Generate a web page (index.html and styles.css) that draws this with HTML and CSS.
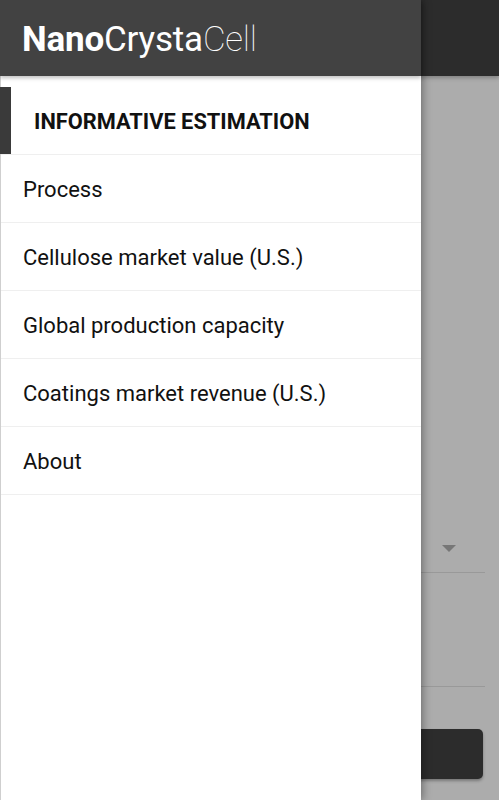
FILE: index.html
```html
<!DOCTYPE html>
<html lang="en">
<head>
    <meta charset="UTF-8">
    <meta name="viewport" content="width=device-width, initial-scale=1.0">
    <title>NanoCrystaCell</title>
    <link rel="stylesheet" href="styles.css">
</head>
<body>
    <div id="app">
        <nav id="drawer">
            <div class="drawer-head">
                <span class="logo"><b>Nano</b>Crysta<span class="thin">Cell</span></span>
            </div>
            <ul class="menu">
                <li class="menu-title"><span class="marker"></span>INFORMATIVE ESTIMATION</li>
                <li>Process</li>
                <li>Cellulose market value (U.S.)</li>
                <li>Global production capacity</li>
                <li>Coatings market revenue (U.S.)</li>
                <li>About</li>
            </ul>
        </nav>
        <div id="backdrop">
            <div class="back-bar"></div>
            <div class="back-page">
                <div class="select"><span class="caret"></span></div>
                <div class="field"></div>
                <div class="back-button"></div>
            </div>
        </div>
    </div>
</body>
</html>
```
FILE: styles.css
```css
*{
    box-sizing: border-box;
}
body{
    margin: 0;
    padding: 0;
    font-family: Roboto, "Liberation Sans", sans-serif;
    background-color: #acacac;
}
#app{
    display: flex;
    height: 800px;
    overflow: hidden;
}
#drawer{
    width: 421px;
    flex-shrink: 0;
    background-color: white;
    border-left: 1px solid #cfcfcf;
    position: relative;
    z-index: 2;
    box-shadow: 2px 0 8px rgba(0,0,0,0.35);
}
.drawer-head{
    height: 76px;
    margin-left: -1px;
    background-color: #424242;
    color: white;
    display: flex;
    align-items: center;
    padding-left: 22px;
    box-shadow: 0 2px 4px rgba(0,0,0,0.25);
    position: relative;
}
.logo{
    font-size: 35px;
    font-weight: 400;
    letter-spacing: -0.2px;
    margin-top: 2px;
}
.logo b{
    font-weight: 700;
}
.logo .thin{
    font-weight: 100;
}
.menu{
    list-style: none;
    margin: 0;
    padding: 11px 0 0 0;
}
.menu li{
    height: 68px;
    border-bottom: 1px solid #efefef;
    display: flex;
    align-items: center;
    padding-left: 22px;
    padding-top: 2px;
    font-size: 22px;
    color: #111;
}
.menu li.menu-title{
    height: 68px;
    padding-left: 33px;
    font-weight: 700;
    font-size: 21.8px;
    color: #111;
    position: relative;
}
.marker{
    position: absolute;
    left: -1px;
    top: 0;
    width: 11px;
    height: 67px;
    background-color: #3a3a3a;
}
#backdrop{
    flex: 1;
    display: flex;
    flex-direction: column;
}
.back-bar{
    height: 76px;
    background-color: #2c2c2c;
    box-shadow: 0 2px 4px rgba(0,0,0,0.25);
}
.back-page{
    flex: 1;
    padding-right: 14px;
    padding-top: 461px;
}
.select{
    height: 36px;
    border-bottom: 1px solid #999;
    display: flex;
    justify-content: flex-end;
    padding-right: 29px;
    padding-top: 8px;
}
.caret{
    width: 0;
    height: 0;
    border-left: 7px solid transparent;
    border-right: 7px solid transparent;
    border-top: 7px solid #777;
}
.field{
    height: 114px;
    border-bottom: 1px solid #999;
}
.back-button{
    margin-top: 42px;
    margin-left: -20px;
    margin-right: 2px;
    height: 50px;
    background-color: #2c2c2c;
    border-radius: 5px;
    box-shadow: 0 2px 3px rgba(0,0,0,0.3);
}
```
